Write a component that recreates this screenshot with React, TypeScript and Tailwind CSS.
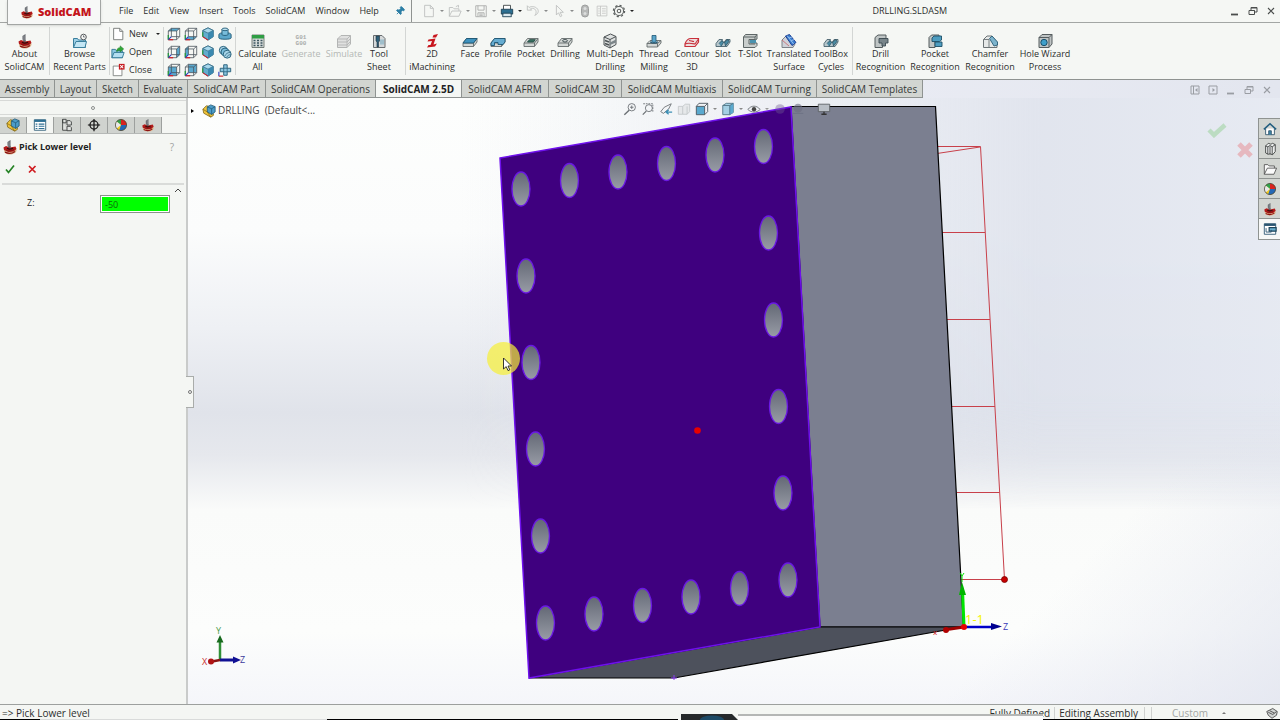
import React from "react";
import { Pin } from "lucide-react";

type IconProps = { className?: string };

function Svg({ className = "size-4", box = "0 0 16 16", children }: { className?: string; box?: string; children: React.ReactNode }) {
  return (
    <svg viewBox={box} className={`shrink-0 ${className}`} fill="none" aria-hidden="true">
      {children}
    </svg>
  );
}

function CamLogo({ className = "size-4" }: IconProps) {
  return (
    <Svg className={className}>
      <path d="M2 11.5c0-1.500 3-3 6.500-3s5.500 1 6 2.500c.4 2-2.500 4.500-6.500 4.500s-6-2-6-4z" fill="#dcb98f" />
      <path d="M1.500 8.500 4 7l4 1.500 5.500-1 1 2.500-3 2.500-5 .5L2 11z" fill="#b31b1b" />
      <path d="M4 11c2 1.200 6 1.200 8-.8M3 13.200c3 1.500 7 1.500 10-.8" stroke="#8e1414" strokeWidth="1.300" />
      <path d="M5 9.300c1.500 1 4 1 6 0" stroke="#2e0d0d" strokeWidth="1.200" />
      <path d="M5.500 3 8.500 1v5.500l.5 2-2 .8-1.500-3z" fill="#5d6166" />
      <path d="M7 2.500v5" stroke="#a8abb0" strokeWidth=".8" />
    </Svg>
  );
}

function AssemblyIcon({ className = "size-3.5" }: IconProps) {
  return (
    <Svg className={className}>
      <path d="M1 6l4-4 4 1v6l4 2v2l-3 2-8-4.500z" fill="#f0c53c" stroke="#7d6414" strokeWidth=".9" />
      <path d="M6 3.400 10 1l5 2v6l-4 3-5-3z" fill="#4c9dc9" stroke="#1d5673" strokeWidth=".9" />
      <path d="M6 3.400l5 2L15 3M11 5.400V12" stroke="#1d5673" strokeWidth=".8" />
      <path d="M1 6l5 3 4 6" stroke="#7d6414" strokeWidth=".8" />
    </Svg>
  );
}

function BallIcon({ className = "size-3.5" }: IconProps) {
  return (
    <Svg className={className}>
      <circle cx="8" cy="8" r="6.4" fill="#f2c81e" />
      <path d="M8 8 3 4A6.4 6.4 0 0 1 8 1.6z" fill="#31a04a" />
      <path d="M8 1.6A6.4 6.4 0 0 1 14.4 8H8z" fill="#d9231f" />
      <path d="M8 8h6.4A6.4 6.4 0 0 1 6 14z" fill="#2468b5" />
      <path d="M3 4a6.4 6.4 0 0 0 0 8l5-4z" fill="#e8e8e8" />
      <circle cx="8" cy="8" r="6.4" stroke="#3a3a3a" strokeWidth=".8" />
    </Svg>
  );
}

function FolderClock() {
  return (
    <Svg>
      <path d="M1.500 5.500h4l1 1.500h7v7.500h-12z" fill="#9fd0e6" stroke="#3a7f9c" />
      <path d="M1.500 14.500 4 8.500h10.500l-1.500 6z" fill="#c3e6f4" stroke="#3a7f9c" />
      <circle cx="11.500" cy="4" r="2.800" fill="#f4f6f4" stroke="#55595c" />
      <path d="M11.500 2.400V4h1.300" stroke="#55595c" strokeWidth=".8" />
    </Svg>
  );
}

function NewIcon({ className = "size-3.5" }: IconProps) {
  return (
    <Svg className={className}>
      <path d="M3 1.500h7l3.500 3.500v9.500H3z" fill="#fff" stroke="#6f7371" />
      <path d="M10 1.500V5h3.500" stroke="#6f7371" />
    </Svg>
  );
}

function OpenIcon() {
  return (
    <Svg className="size-3.5">
      <path d="M1 5h4l1 1.500h7V14.500H1z" fill="#8fc9e2" stroke="#2d7391" />
      <path d="M1 14.500 3.500 8.500H15l-2 6z" fill="#b4def0" stroke="#2d7391" />
      <path d="M6.500 7.500c0-3 1.500-4.500 4-4.500V1l4 3.500-4 3.500V6c-1.500 0-2.500.5-4 1.500z" fill="#2fa836" stroke="#177420" strokeWidth=".6" />
    </Svg>
  );
}

function CloseFileIcon() {
  return (
    <Svg className="size-3.5">
      <path d="M2.500 3.500h10v11h-10z" fill="#fff" stroke="#7d807e" />
      <rect x="9" y="1" width="6.500" height="6.500" fill="#c4161c" />
      <path d="M10.500 2.500l3.500 3.500M14 2.500l-3.500 3.500" stroke="#fff" strokeWidth="1.200" />
    </Svg>
  );
}

type Face = "top" | "right" | "bottom" | "left" | "front" | "back";
const facePath: Record<Face, string> = {
  top: "M1.500 4.500 5 1.500h9.500L11 4.500z",
  right: "M11 4.500 14.500 1.500V11L11 14.500z",
  bottom: "M1.500 14.500 5 11h9.500L11 14.500z",
  left: "M1.500 4.500 5 1.500V11l-3.500 3.500z",
  front: "M1.500 4.500H11v10H1.500z",
  back: "M5 1.500h9.500V11H5z",
};

function WireCube({ face }: { face: Face }) {
  return (
    <Svg className="size-3.5">
      <path d={facePath[face]} fill="#5aa9cf" />
      <path d="M1.500 4.500H11v10H1.500zM5 1.500h9.500V11H5zM1.500 4.500 5 1.500M11 4.500l3.500-3M11 14.500l3.500-3.500" stroke="#4a545c" strokeWidth=".9" />
      <path d="M1.500 14.500H7" stroke="#d3242c" strokeWidth="1.500" />
      <path d="M1.500 14.500V9" stroke="#2b9a3e" strokeWidth="1.500" />
      <path d="M1.500 14.500 5 11" stroke="#2a3ec0" strokeWidth="1.200" />
    </Svg>
  );
}

function SolidCube() {
  return (
    <Svg className="size-3.5">
      <path d="M8 1 14 4v7l-6 4-6-4V4z" fill="#63acce" stroke="#2b637c" />
      <path d="M2 4l6 3 6-3-6-3z" fill="#a9d8ec" stroke="#2b637c" strokeWidth=".8" />
      <path d="M8 7l6-3v7l-6 4z" fill="#3b89b0" />
      <path d="M2 11l6 4" stroke="#d3242c" strokeWidth="1.300" />
      <path d="M2 11V6" stroke="#2b9a3e" strokeWidth="1.300" />
    </Svg>
  );
}

function Boss() {
  return (
    <Svg className="size-3.5">
      <path d="M1 9c0-2 3-2.500 7-2.500s7 .5 7 2.500v3.500c0 2-14 2-14 0z" fill="#5ca7ca" stroke="#1f5872" />
      <path d="M4.500 2.500v6c0 1.500 7 1.500 7 0v-6" fill="#79bddb" stroke="#1f5872" />
      <ellipse cx="8" cy="2.700" rx="3.500" ry="1.500" fill="#bfe3f1" stroke="#1f5872" />
    </Svg>
  );
}

function Coils() {
  return (
    <Svg className="size-3.5">
      <circle cx="6" cy="6" r="4.500" fill="#a8d5e8" stroke="#1f5872" />
      <circle cx="8" cy="8" r="4.500" fill="#79bddb" stroke="#1f5872" />
      <circle cx="10.500" cy="10.500" r="4.500" fill="#a8d5e8" stroke="#1f5872" />
      <path d="M8 12.500c1-2.500 3-4 6-4M10 14c.8-1.800 2-2.800 4.500-3" stroke="#1f5872" strokeWidth=".8" />
    </Svg>
  );
}

function CrossBlocks() {
  return (
    <Svg className="size-3.5">
      <path d="M6.500 2h4v4h4v4h-4v4h-4v-4h-4V6h4z" fill="#8cc6df" stroke="#1f5872" />
      <path d="M6.500 6h4v4h-4z" stroke="#1f5872" strokeWidth=".8" />
      <path d="M1 10v5" stroke="#2a3ec0" strokeWidth="1.300" />
      <path d="M1 15h5" stroke="#d3242c" strokeWidth="1.300" />
    </Svg>
  );
}

function CalcIcon() {
  return (
    <Svg>
      <path d="M2 2h12v12.500H2z" fill="#d7dcda" stroke="#5a6460" strokeWidth=".8" />
      <path d="M2 2h12v3.500H2z" fill="#2f9e44" />
      <path d="M3.500 7.500h2M7 7.500h2M10.500 7.500h2M3.500 10h2M7 10h2M10.500 10h2M3.500 12.500h2M7 12.500h2M10.500 12.500h2" stroke="#3d5660" strokeWidth="1.400" />
    </Svg>
  );
}

function GCodeIcon() {
  return (
    <span className="flex h-4 flex-col items-center justify-end pb-0.5 font-mono text-[6px] leading-[6px] font-bold text-[#a9acaa]">
      <span>G01</span>
      <span>G00</span>
    </span>
  );
}

function SimulateIcon() {
  return (
    <Svg>
      <path d="M1.500 6 5 2.500h9.500V11L11 14.500H1.500z" fill="#e0e1e0" stroke="#b3b5b4" />
      <path d="M1.500 6H11l3.500-3.500M11 6v8.500M1.500 9H11l3.500-3.500M1.500 12H11l3.500-3.500" stroke="#b3b5b4" strokeWidth=".9" />
    </Svg>
  );
}

function SheetIcon() {
  return (
    <Svg>
      <path d="M2.500 2.500H11L14 5.500v9H2.500z" fill="#d5d9da" stroke="#686d6f" />
      <path d="M5 3h3.500v5l-1 1v5H6V9L5 8z" fill="#2e5f78" stroke="#20323c" strokeWidth=".6" />
      <path d="M10 6.500v5M12 6.500v5" stroke="#6aa5bd" />
    </Svg>
  );
}

function IMachIcon() {
  return (
    <Svg>
      <path d="M4.500 6.500 11.500 5.500 9.500 11.500 13 10.500 11 13.500 3 14.500l1.500-2.500h2L8 8 3.500 8.500z" fill="#c8161d" />
      <path d="M9.500 2 14 1l-2 3.500H8.500z" fill="#c8161d" />
    </Svg>
  );
}

function SlabIcon({ kind }: { kind: "face" | "profile" | "pocket" | "drill" }) {
  return (
    <Svg>
      <path d="M1 10 4.500 5.500H15V9l-3.500 4.500H1z" fill="#d3d7d5" stroke="#646c6c" strokeWidth=".9" />
      <path d="M1 10h10.500v3.500M11.500 10 15 5.500" stroke="#646c6c" strokeWidth=".9" />
      {kind === "face" && <path d="M1 10 4.500 5.500H15L11.500 10z" fill="#3f93bf" stroke="#1d5673" strokeWidth=".9" />}
      {kind === "profile" && <path d="M1 10 4.500 5.500H15V9l-2 2.500H8V9.500H4.500v3H1z" fill="#66acd0" stroke="#1d5673" strokeWidth=".9" />}
      {kind === "pocket" && <path d="M4.500 9 6.500 6.700h5.800L10.500 9z" fill="#3c7466" stroke="#1f473e" strokeWidth=".9" />}
      {kind === "drill" && <ellipse cx="8" cy="7.800" rx="2.400" ry="1.200" fill="#eef1ef" stroke="#39474a" />}
    </Svg>
  );
}

function DepthIcon() {
  return (
    <Svg>
      <path d="M2 4 8.500 1 14 3.500v8L8 15 2 12z" fill="#dfe2e1" stroke="#4c5254" />
      <path d="M2 4l6 2.500 6-3M8 6.500V15" stroke="#4c5254" />
      <path d="M3 7.500l4 1.500M3 10.500l4 1.500" stroke="#4c5254" strokeWidth="1.400" />
      <path d="M8 9.500 14 6.500v3L8 12z" fill="#7c8689" />
    </Svg>
  );
}

function ThreadIcon() {
  return (
    <Svg>
      <path d="M1 10.500 4 7.500h11v2.500l-3.500 4H1z" fill="#d3d7d5" stroke="#646c6c" strokeWidth=".9" />
      <path d="M1 10.500h10.500V14M11.500 10.500l3.500-3" stroke="#646c6c" strokeWidth=".9" />
      <path d="M6 2.500h4v6c0 1.200-4 1.200-4 0z" fill="#5ba5c9" stroke="#1d5673" strokeWidth=".8" />
      <path d="M4.500 8.500c0 2 7 2 7 0" stroke="#1d5673" strokeWidth="1.200" />
    </Svg>
  );
}

function ContourIcon() {
  return (
    <Svg>
      <path d="M1 11c1-3 3-5.500 6-5.500h7.500V9l-3.500 4.500H1z" fill="#ecdede" stroke="#c9303a" strokeWidth="1.200" />
      <path d="M1 11c3-1.500 5-1 10 0l3.500-5M5 7.500c2 0 3 1 5 1" stroke="#c9303a" strokeWidth="1.100" />
    </Svg>
  );
}

function SlotIcon() {
  return (
    <Svg>
      <path d="M1 10.500 4 6.500h3.500l-1 2.500h3l1.500-2.500H15v2.500l-3 4.500H1z" fill="#b8c8cd" stroke="#4a636e" strokeWidth=".9" />
      <path d="M4 10.500 7 7.500l1.500 2-2.500 4M9.500 9l3.500-2.500 1 2-3.500 4.500z" fill="#4b8ba3" stroke="#22495a" strokeWidth=".7" />
    </Svg>
  );
}

function TSlotIcon() {
  return (
    <Svg>
      <path d="M1.500 4 3.500 1.500H15V6l-2 1H8.500v3H15v2.500l-2 2H1.500z" fill="#c9cecc" stroke="#5d6666" />
      <path d="M1.500 4H13v2.500H7v4.500h6M13 4l2-2.500" stroke="#5d6666" />
      <path d="M8 7h6v3H8z" fill="#4a92ae" />
    </Svg>
  );
}

function SurfaceIcon() {
  return (
    <Svg>
      <path d="M1 7 5 3l9 8-2 3.500H1z" fill="#cfd2d8" stroke="#7d8288" />
      <path d="M4.500 3 8.500 1.500 15 9.500l-4 3z" fill="#3b7fd0" stroke="#1c3f93" />
      <path d="M6 2.500l6.800 8.700M8 5l3-1M10 8l3-1.500" stroke="#a9cdf2" strokeWidth=".8" />
      <path d="M1 7l7 6" stroke="#c9646a" strokeWidth=".8" />
    </Svg>
  );
}

function RecogIcon({ kind }: { kind: "drill" | "pocket" | "chamfer" }) {
  return (
    <Svg>
      {kind === "drill" && (
        <>
          <path d="M2 4.500 5 2h8v3.500H9.500v9H2z" fill="#bfc5c5" stroke="#545c5e" />
          <path d="M6 5.500h9v4.500h-2.500V13H9v-3H6z" fill="#78858a" stroke="#3b4a50" strokeWidth=".9" />
        </>
      )}
      {kind === "pocket" && (
        <>
          <path d="M2 4.500 4.500 2H12v3.500H8v9H2z" fill="#bfc5c5" stroke="#545c5e" />
          <path d="M5 5 7 3h7.500v4l-2 1.500H5zM8 9h7v4.500H8z" fill="#4e9dc0" stroke="#1d4f68" strokeWidth=".9" />
        </>
      )}
      {kind === "chamfer" && (
        <>
          <path d="M1.500 6.500 5 3h5l5 6v5.500H1.500z" fill="#e6e9e8" stroke="#6c7476" />
          <path d="M1.500 6.500H7v8" stroke="#6c7476" strokeWidth=".9" />
          <path d="M7.500 5.500 10 3l5.500 6v3L12 13z" fill="#7cb4cd" stroke="#2a5f78" strokeWidth=".9" />
        </>
      )}
    </Svg>
  );
}

function WizardIcon() {
  return (
    <Svg>
      <path d="M2 4.500 5 1.500h10v9.500l-3 3.500H2z" fill="#bfc4c4" stroke="#555c5e" />
      <path d="M2 4.500h10v10M12 4.500l3-3" stroke="#555c5e" />
      <circle cx="7" cy="9.500" r="3.200" fill="#3f9fca" stroke="#1c506a" />
    </Svg>
  );
}

function Tool({ icon, lines, className, disabled }: { icon: React.ReactNode; lines: string[]; className: string; disabled?: boolean }) {
  return (
    <button
      type="button"
      disabled={disabled}
      className={`flex shrink-0 flex-col items-center pt-2.5 text-[9px] leading-[13px] whitespace-nowrap ${disabled ? "text-[#b4b7b5]" : "text-[#2c2e2d]"} ${className}`}
    >
      <span className="flex h-3.5 justify-center">{icon}</span>
      {lines.map((line) => (
        <span key={line}>{line}</span>
      ))}
    </button>
  );
}

function Divider() {
  return <span className="my-1 w-px shrink-0 bg-[#d3d6d4]" />;
}

function Caret({ className = "border-t-[#3c3f3e]" }: IconProps) {
  return <span className={`size-0 shrink-0 border-x-2 border-t-2 border-x-transparent ${className}`} />;
}

function WindowButtons({ tone }: { tone: string }) {
  return (
    <div className={`flex items-center gap-2 ${tone}`}>
      <button type="button" aria-label="Minimize">
        <Svg className="size-2.5" box="0 0 10 10"><path d="M1 8.500h7" stroke="currentColor" strokeWidth="1.800" /></Svg>
      </button>
      <button type="button" aria-label="Restore">
        <Svg className="size-2.5" box="0 0 10 10"><path d="M1 4.500h5.500v4H1zM3 4V1.500h6v4.500H6.500M1 4.500h5.500M3 2h6" stroke="currentColor" /></Svg>
      </button>
      <button type="button" aria-label="Close window">
        <Svg className="size-2.5" box="0 0 10 10"><path d="M2 2l6 6M8 2l-6 6" stroke="currentColor" strokeWidth="1.100" /></Svg>
      </button>
    </div>
  );
}

const menus = ["File", "Edit", "View", "Insert", "Tools", "SolidCAM", "Window", "Help"];

function QuickAccess() {
  const pale = "#bdbfbe";
  return (
    <div className="ml-2.5 flex items-center gap-1 text-[#bdbfbe]">
      <button type="button" aria-label="New document" className="flex items-center gap-1">
        <Svg className="size-3.5"><path d="M3 1.500h6.500l3.500 3.500v9.500H3zM9.500 1.500V5H13" stroke={pale} /></Svg>
        <Caret className="border-t-[#8a8c8b]" />
      </button>
      <button type="button" aria-label="Open document" className="flex items-center gap-1">
        <Svg className="size-3.5"><path d="M1.500 14V4h4L7 5.500h5.500V8M1.500 14l3-6h10.500l-2.500 6zM9 3l3-1.500V4" stroke={pale} /></Svg>
        <Caret className="border-t-[#8a8c8b]" />
      </button>
      <button type="button" aria-label="Save" className="flex items-center gap-1">
        <Svg className="size-3.5"><path d="M2 2h12v12.500H2zM4.500 2v5h7V2M4.500 14.500V10h7v4.500M6 11.500h4M6 13h4" stroke="#a9abaa" /></Svg>
        <Caret className="border-t-[#8a8c8b]" />
      </button>
      <button type="button" aria-label="Print" className="flex items-center gap-1">
        <Svg className="size-3.5">
          <path d="M4 6V1.500h8V6" fill="#fff" stroke="#3c4244" />
          <path d="M1.500 6h13v5.500h-13z" fill="#2c6f91" stroke="#1b3f52" />
          <path d="M3.500 10.500h9l.5 4H3z" fill="#d9e8ef" stroke="#1b3f52" />
        </Svg>
        <Caret className="border-t-[#222]" />
      </button>
      <button type="button" aria-label="Undo" className="flex items-center gap-1">
        <Svg className="size-3.5"><path d="M1.500 2v5h5L5 5.500c3-1.500 6 0 6.500 3 .2 2-.5 3.500-1.500 4.500 4-1.500 5-5 3-7.500S6.500 2 3.500 4z" stroke={pale} /></Svg>
        <Caret className="border-t-[#8a8c8b]" />
      </button>
      <button type="button" aria-label="Select" className="flex items-center gap-1">
        <Svg className="size-3.5"><path d="M5 1.500v11l2.500-2.500 2 4.500 1.800-1-2-4H13z" stroke={pale} /></Svg>
        <Caret className="border-t-[#8a8c8b]" />
      </button>
      <button type="button" aria-label="Rebuild" className="px-0.5">
        <Svg className="h-3.5 w-2.5" box="0 0 10 14"><rect x="1.500" y="1" width="7" height="12" rx="3.500" fill="#b7b9b8" stroke="#9c9e9d" /><circle cx="5" cy="4.500" r="1.500" fill="#dcdedd" /><circle cx="5" cy="9.500" r="1.500" fill="#dcdedd" /></Svg>
      </button>
      <button type="button" aria-label="File properties">
        <Svg className="size-3"><path d="M1.500 1.500h13v13h-13zM6 1.500v13M3 5h2M3 8h2M3 11h2M8 5h5M8 8h5M8 11h5" stroke={pale} /></Svg>
      </button>
      <button type="button" aria-label="Options" className="flex items-center gap-1">
        <Svg className="size-3.5">
          <circle cx="8" cy="8" r="5.200" stroke="#5a5e5d" strokeWidth="1.200" />
          <circle cx="8" cy="8" r="6.400" stroke="#5a5e5d" strokeWidth="1.400" strokeDasharray="2.500 2.500" />
          <circle cx="8" cy="8" r="2" stroke="#5a5e5d" strokeWidth="1.200" />
        </Svg>
        <Caret className="border-t-[#222]" />
      </button>
    </div>
  );
}

function TitleBar() {
  return (
    <header className="relative z-10 flex h-[23px] shrink-0 items-center border-b border-[#a3a6a4] bg-[#f5f7f4] pr-1">
      <div className="ml-[7px] flex h-[25px] w-[94px] shrink-0 items-center gap-1 self-start border border-t-0 border-[#a3a6a4] bg-[#f7f8f7] pl-3 shadow-sm">
        <CamLogo className="size-3.5" />
        <span className="text-[11px] leading-4 font-extrabold text-[#c4141b]">SolidCAM</span>
      </div>
      <nav className="ml-[18px] flex items-center gap-2.5 text-[9px] text-[#2c2e2d]">
        {menus.map((m) => (
          <button key={m} type="button">{m}</button>
        ))}
      </nav>
      <button type="button" aria-label="Pin menu" className="ml-4 text-[#2d7fa6]">
        <Pin className="size-2.5 rotate-45 fill-current" />
      </button>
      <span className="ml-1.5 h-full w-px bg-[#8f9391]" />
      <QuickAccess />
      <span className="ml-auto text-[9px] text-[#2c2e2d]">DRLLING.SLDASM</span>
      <div className="ml-[283px]">
        <WindowButtons tone="text-[#4a4d4c]" />
      </div>
    </header>
  );
}

function Ribbon() {
  return (
    <section aria-label="Commands" className="flex h-[57px] shrink-0 overflow-hidden border-b border-[#8f9391] bg-[#f5f7f4]">
      <Tool className="w-[49px]" icon={<CamLogo />} lines={["About", "SolidCAM"]} />
      <Divider />
      <Tool className="w-[59px]" icon={<FolderClock />} lines={["Browse", "Recent Parts"]} />
      <Divider />
      <div className="flex w-[53px] shrink-0 flex-col justify-center gap-1 pt-0.5 pl-px text-[9px] leading-[14px] text-[#2c2e2d]">
        <button type="button" className="flex items-center gap-1"><NewIcon />New<Caret className="ml-1 border-t-[#222]" /></button>
        <button type="button" className="flex items-center gap-1"><OpenIcon />Open</button>
        <button type="button" className="flex items-center gap-1"><CloseFileIcon />Close</button>
      </div>
      <Divider />
      <div className="grid w-[71px] shrink-0 grid-cols-4 content-center justify-items-center gap-y-1 px-px pt-0.5">
        <WireCube face="top" />
        <WireCube face="bottom" />
        <SolidCube />
        <Boss />
        <WireCube face="right" />
        <WireCube face="left" />
        <SolidCube />
        <Coils />
        <WireCube face="front" />
        <WireCube face="back" />
        <SolidCube />
        <CrossBlocks />
      </div>
      <Divider />
      <Tool className="w-[43px]" icon={<CalcIcon />} lines={["Calculate", "All"]} />
      <Tool className="w-11" icon={<GCodeIcon />} lines={["Generate"]} disabled />
      <Tool className="w-[42px]" icon={<SimulateIcon />} lines={["Simulate"]} disabled />
      <Tool className="mr-3 w-7" icon={<SheetIcon />} lines={["Tool", "Sheet"]} />
      <Divider />
      <Tool className="w-[52px]" icon={<IMachIcon />} lines={["2D", "iMachining"]} />
      <Tool className="w-6" icon={<SlabIcon kind="face" />} lines={["Face"]} />
      <Tool className="w-8" icon={<SlabIcon kind="profile" />} lines={["Profile"]} />
      <Tool className="w-[34px]" icon={<SlabIcon kind="pocket" />} lines={["Pocket"]} />
      <Tool className="w-[34px]" icon={<SlabIcon kind="drill" />} lines={["Drilling"]} />
      <Tool className="w-14" icon={<DepthIcon />} lines={["Multi-Deph", "Drilling"]} />
      <Tool className="w-8" icon={<ThreadIcon />} lines={["Thread", "Milling"]} />
      <Tool className="w-11" icon={<ContourIcon />} lines={["Contour", "3D"]} />
      <Tool className="w-[18px]" icon={<SlotIcon />} lines={["Slot"]} />
      <Tool className="w-9" icon={<TSlotIcon />} lines={["T-Slot"]} />
      <Tool className="w-[42px]" icon={<SurfaceIcon />} lines={["Translated", "Surface"]} />
      <Tool className="w-[42px]" icon={<SlotIcon />} lines={["ToolBox", "Cycles"]} />
      <Divider />
      <Tool className="w-[55px]" icon={<RecogIcon kind="drill" />} lines={["Drill", "Recognition"]} />
      <Tool className="w-[54px]" icon={<RecogIcon kind="pocket" />} lines={["Pocket", "Recognition"]} />
      <Tool className="w-14" icon={<RecogIcon kind="chamfer" />} lines={["Chamfer", "Recognition"]} />
      <Tool className="w-[54px]" icon={<WizardIcon />} lines={["Hole Wizard", "Process"]} />
    </section>
  );
}

const tabs: { label: string; width: string }[] = [
  { label: "Assembly", width: "w-[55px]" },
  { label: "Layout", width: "w-[42px]" },
  { label: "Sketch", width: "w-[42px]" },
  { label: "Evaluate", width: "w-[49px]" },
  { label: "SolidCAM Part", width: "w-[78px]" },
  { label: "SolidCAM Operations", width: "w-[110px]" },
  { label: "SolidCAM 2.5D", width: "w-[86px]" },
  { label: "SolidCAM AFRM", width: "w-[87px]" },
  { label: "SolidCAM 3D", width: "w-[73px]" },
  { label: "SolidCAM Multiaxis", width: "w-[101px]" },
  { label: "SolidCAM Turning", width: "w-[94px]" },
  { label: "SolidCAM Templates", width: "w-[106px]" },
];

function TabBar() {
  return (
    <div className="flex h-[18px] shrink-0 items-center bg-linear-to-r from-[#e9ebf3] from-70% to-[#e3e6ef]">
      <div role="tablist" className="flex h-full shrink-0">
        {tabs.map((t) => {
          const active = t.label === "SolidCAM 2.5D";
          return (
            <button
              key={t.label}
              role="tab"
              type="button"
              aria-selected={active}
              className={`flex h-full items-center justify-center border-r border-b border-[#8f9391] pt-0.5 text-[10px] whitespace-nowrap ${t.width} ${active ? "bg-[#f5f7f4] font-bold text-[#222]" : "bg-[#d2d5d1] text-[#363938]"}`}
            >
              {t.label}
            </button>
          );
        })}
      </div>
      <div className="mr-2 ml-auto flex items-center gap-2 pt-0.5 text-[#9a9da3]">
        <button type="button" aria-label="Dock left">
          <Svg className="size-2.5" box="0 0 10 10"><path d="M1 1h8v8H1zM3.500 1v8" stroke="currentColor" /><path d="M7.500 3 5 5l2.500 2z" fill="currentColor" /></Svg>
        </button>
        <button type="button" aria-label="Dock right">
          <Svg className="size-2.5" box="0 0 10 10"><path d="M1 1h8v8H1z" stroke="currentColor" /><path d="M4.500 3 7 5 4.500 7z" fill="currentColor" /></Svg>
        </button>
        <WindowButtons tone="text-[#9a9da3]" />
      </div>
    </div>
  );
}

function PropertyPanel() {
  const panelTabs: { name: string; icon: React.ReactNode }[] = [
    { name: "Feature tree", icon: <AssemblyIcon /> },
    {
      name: "Properties",
      icon: (
        <Svg className="size-3.5">
          <path d="M1.500 2h13v12h-13z" fill="#fff" stroke="#2d5b77" />
          <path d="M1.500 2h13v2.500h-13z" fill="#2d6f94" />
          <path d="M3 7h2M3 9.500h2M3 12h2M6.500 7H13M6.500 9.500H13M6.500 12H13" stroke="#2d6f94" strokeWidth="1.200" />
        </Svg>
      ),
    },
    {
      name: "Configurations",
      icon: (
        <Svg className="size-3.5">
          <path d="M3 1.500h4v4H3zM3 1.500V14h5M8 3h3.500l1.500 1.500V8H8zM8 9.500h3.500L13 11v3.500H8z" fill="#dfe1df" stroke="#3c3f3e" />
        </Svg>
      ),
    },
    {
      name: "Dimensions",
      icon: (
        <Svg className="size-3.5">
          <circle cx="8" cy="8" r="4.600" stroke="#111" strokeWidth="1.400" />
          <path d="M8 1v14M1 8h14" stroke="#111" strokeWidth="1.400" />
        </Svg>
      ),
    },
    { name: "Display", icon: <BallIcon /> },
    { name: "CAM", icon: <CamLogo className="size-3.5" /> },
  ];
  return (
    <aside className="relative flex w-[188px] shrink-0 flex-col border-r-2 border-[#c9cbca] bg-[#f4f6f3] text-[#222]">
      <div className="mt-0.5 flex h-[15px] items-center justify-center border-y border-[#d7d9d7]">
        <span className="size-1 rounded-full border border-[#8c8f8d]" />
      </div>
      <div role="tablist" className="flex h-[19px] border-b border-[#b5b8b6] pt-0.5">
        {panelTabs.map((t) => (
          <button
            key={t.name}
            type="button"
            role="tab"
            aria-label={t.name}
            aria-selected={t.name === "Properties"}
            className={`flex w-[27px] items-center justify-center border-r border-[#9da09e] ${t.name === "Properties" ? "bg-[#f4f6f3]" : "bg-[#d0d3cf]"}`}
          >
            {t.icon}
          </button>
        ))}
      </div>
      <div className="flex h-[26px] items-center gap-px pr-3 pl-0.5">
        <CamLogo />
        <h1 className="text-[9px] font-bold">Pick Lower level</h1>
        <button type="button" aria-label="Help" className="ml-auto text-[10px] text-[#a0a3a1]">?</button>
      </div>
      <div className="mx-0.5 flex h-[25px] items-start gap-3 border-b-2 border-[#d9dbd9] pt-1 pl-[3px]">
        <button type="button" aria-label="OK">
          <Svg className="size-2.5" box="0 0 10 10"><path d="M1 5.500 3.500 8.500 9 1.500" stroke="#258325" strokeWidth="1.700" /></Svg>
        </button>
        <button type="button" aria-label="Cancel">
          <Svg className="size-2.5" box="0 0 10 10"><path d="M2 2l6.500 6.500M8.500 2 2 8.500" stroke="#cf1a1f" strokeWidth="1.700" /></Svg>
        </button>
      </div>
      <button type="button" aria-label="Collapse" className="mt-px mr-1 self-end">
        <Svg className="size-2" box="0 0 8 8"><path d="M1 6l3-3 3 3" stroke="#444" /></Svg>
      </button>
      <div className="mt-px flex items-start pr-4 pl-[27px]">
        <label htmlFor="z-level" className="w-[74px] text-[9px] leading-4">Z:</label>
        <input
          id="z-level"
          type="text"
          defaultValue="-50"
          className="h-[18px] w-[70px] rounded-none border border-[#8c928c] bg-[#00ff00] px-1 text-[9px] text-[#0b6a0b] outline-1 -outline-offset-2 outline-white"
        />
      </div>
      <button
        type="button"
        aria-label="Toggle panel"
        className="absolute top-[278px] -right-2 z-10 flex h-8 w-2 items-center justify-center border border-l-0 border-[#a9acaa] bg-[#f4f6f3]"
      >
        <span className="size-1 rounded-full border border-[#777]" />
      </button>
    </aside>
  );
}

const holes: [number, number][] = [
  [521, 189], [569.5, 180.5], [618, 172], [666.5, 163.5], [715, 155], [763.5, 146.5],
  [526, 276], [531, 362.5], [535.5, 449], [540.5, 536], [545.5, 623],
  [768.5, 233], [773.5, 320], [778.5, 406.5], [783, 493], [788, 580],
  [594, 614], [642.5, 605.5], [691, 597], [739.5, 588.5],
];

function Model() {
  return (
    <svg viewBox="188 98 1092 606" className="block h-full w-full" role="img" aria-label="Drilling model">
      <defs>
        <linearGradient id="bore" x1="0" y1="0" x2="0" y2="1">
          <stop offset="0" stopColor="#636875" />
          <stop offset="1" stopColor="#989ca6" />
        </linearGradient>
      </defs>
      <g stroke="#c8404a" strokeWidth="1" fill="none">
        <path d="M937 146.500H980.500L1004.500 579.500H960M980 147 937 153.500M942 232.500H985M947 319.500H990M952 406.500H995M957 492.500H999.500" />
      </g>
      <polygon points="791,106.500 935.500,106.500 963.500,627 820,627" fill="#7b7f90" stroke="#000" strokeWidth="1.200" />
      <polygon points="529,678 820,627 963,627 674,678" fill="#4d515c" stroke="#000" strokeWidth="1.200" />
      <polygon points="500,158 791,107 820,627 529,678" fill="#3f007f" stroke="#6f10ee" strokeWidth="1.500" />
      {holes.map(([x, y]) => (
        <ellipse key={`${x}-${y}`} cx={x} cy={y} rx="9" ry="17" fill="url(#bore)" stroke="#6a18e4" strokeWidth="1.300" />
      ))}
      <circle cx="697.5" cy="430.500" r="3.300" fill="#e80000" />
      <path d="M671 678h6M674 675v5" stroke="#8a3ff0" />
      <circle cx="1004.500" cy="579.500" r="3" fill="#c80000" stroke="#700" strokeWidth=".8" />
      <path d="M964 626 962.500 590" stroke="#00e400" strokeWidth="3" />
      <path d="M959 595 962 582l4 13z" fill="#00b400" />
      <path d="M960 573l2 3 2-3M962 576v6" stroke="#00e400" fill="none" />
      <path d="M964 627H992" stroke="#0000c8" strokeWidth="2.500" />
      <path d="M991 623l11 3.500-11 3.500z" fill="#00008f" />
      <path d="M964 627 947 629.500" stroke="#a00000" strokeWidth="3" />
      <circle cx="946" cy="630" r="3" fill="#b00000" />
      <circle cx="964" cy="627" r="3" fill="#e80000" />
      <g className="font-['Open_Sans',sans-serif]">
        <text x="965" y="624" fontSize="13" fill="#f4f400">1-1</text>
        <text x="1003" y="630" fontSize="9" fill="#3a3ab8">Z</text>
        <text x="933" y="635" fontSize="8" fill="#d02020">x</text>
        <text x="216" y="634" fontSize="9" fill="#4d9c4d">Y</text>
        <text x="202" y="665" fontSize="9" fill="#c83030">X</text>
        <text x="240" y="663" fontSize="9" fill="#3c3c9c">Z</text>
      </g>
      <path d="M220 660V641" stroke="#2f8f36" strokeWidth="2.500" />
      <path d="M216.500 642.500 220 635l3.500 7.500z" fill="#186a1e" />
      <path d="M220 660H235" stroke="#101094" strokeWidth="3" />
      <path d="M233 656.500 241 660l-8 3.500z" fill="#101094" />
      <path d="M220 660l-8 1.500" stroke="#8a1414" strokeWidth="2.500" />
      <circle cx="211" cy="661.500" r="3" fill="#b01414" />
      <circle cx="503.500" cy="358.500" r="16.500" fill="#f6f034" fillOpacity=".7" />
      <path d="M503.500 358v11l2.700-2.400 1.800 4 1.800-.8-1.800-3.800h3.500z" fill="#fff" stroke="#222" strokeWidth=".9" />
    </svg>
  );
}

function ViewToolbar() {
  return (
    <div className="absolute top-1 left-[435px] flex items-center gap-1 text-[#6a6f73]">
      <button type="button" aria-label="Zoom to fit"><Svg className="size-3.5"><circle cx="10" cy="6" r="4.200" stroke="currentColor" /><path d="M7 9.500 1.500 14.500" stroke="currentColor" strokeWidth="1.600" /><path d="M8 6h4M10 4v4" stroke="currentColor" /></Svg></button>
      <button type="button" aria-label="Zoom to area"><Svg className="size-3.5"><path d="M2.500 2h11v9" stroke="currentColor" strokeDasharray="2 1" /><circle cx="9" cy="7" r="4" stroke="currentColor" /><path d="M6 10.500 2 14.500" stroke="currentColor" strokeWidth="1.400" /></Svg></button>
      <button type="button" aria-label="Previous view"><Svg className="size-3.5"><path d="M14 2 6 6 2 11l3 2 6-5z" stroke="currentColor" /><path d="M15 11.500H8.500M11 9l-3 2.500 3 2.500" stroke="#3d8fb5" strokeWidth="1.500" /></Svg></button>
      <button type="button" aria-label="Section view"><Svg className="size-3.5"><path d="M1.500 5h5v9h-5zM6.500 5l3-2.500h5V11l-3 3h-5M11.500 5v9" fill="#e6e8ea" stroke="#c4c7c9" /></Svg></button>
      <button type="button" aria-label="View orientation" className="flex items-center gap-1"><Svg className="size-3.5"><path d="M1.500 5H11v9.500H1.500z" fill="#5aa9cf" /><path d="M1.500 5H11v9.500H1.500zM4.500 1.500h10V11M1.500 5l3-3.500M11 5l3.500-3.500M11 14.500l3.500-3.500" stroke="#4a545c" /></Svg><Caret className="border-t-[#888]" /></button>
      <button type="button" aria-label="Display style" className="flex items-center gap-1"><Svg className="size-3.5"><path d="M2 4 6 1.500h8V12l-4 2.500H2z" fill="#a4d0e4" stroke="#4f7484" /><path d="M10 4l4-2.500V12l-4 2.500z" fill="#5aa9cf" /><path d="M2 4h8v10.500M10 4l4-2.500" stroke="#4f7484" /></Svg><Caret className="border-t-[#888]" /></button>
      <button type="button" aria-label="Hide items" className="flex items-center gap-1"><Svg className="size-3.5"><path d="M1 8.500c4-5 10-5 14 0-4 4-10 4-14 0z" stroke="currentColor" /><circle cx="8" cy="8.300" r="2.500" fill="#444" /></Svg><Caret className="border-t-[#999]" /></button>
      <button type="button" aria-label="Edit appearance"><Svg className="size-3.5"><circle cx="8" cy="8" r="5.500" fill="#6d5a92" fillOpacity=".4" /></Svg></button>
      <button type="button" aria-label="Apply scene" className="mr-2"><Svg className="size-3.5"><circle cx="8" cy="7" r="5" fill="#6a6d80" fillOpacity=".6" /><path d="M2 13h12" stroke="#6c7082" /></Svg></button>
      <button type="button" aria-label="View settings"><Svg className="size-3.5"><path d="M1.500 2.500h13V11h-13z" fill="#b9bfc6" stroke="#5b6064" /><path d="M8 11v3M5 14h6" stroke="#333" strokeWidth="1.500" /></Svg></button>
    </div>
  );
}

function TaskPane() {
  const items: { name: string; icon: React.ReactNode }[] = [
    { name: "Home", icon: <Svg className="size-3.5"><path d="M3 7.500V14.500h10V7.500" fill="#fff" stroke="#30566c" /><path d="M1 8.500 8 2l7 6.500" stroke="#235f80" strokeWidth="1.800" /><path d="M6.500 14.500V10h3v4.500" fill="#3f86a8" stroke="#30566c" /></Svg> },
    { name: "Design library", icon: <Svg className="size-3.5"><path d="M3 4.500 6 1.500l3 1 2-1 3 1.500V11l-3 3.500-3-1-2 .5-3-1.500z" fill="#eceeed" stroke="#3c3f3e" /><path d="M5.500 5.500V14M8 5v9M10.500 5.500v9M3 4.500l2.500 1L8 4l2.500 1.500L14 3" stroke="#3c3f3e" /></Svg> },
    { name: "File explorer", icon: <Svg className="size-3.5"><path d="M1.500 14V3h4L7 4.500h6V7M1.500 14l3.500-7h10.500l-3 7z" fill="#fafafa" stroke="#555" /></Svg> },
    { name: "Appearances", icon: <BallIcon className="size-3.5" /> },
    { name: "SolidCAM", icon: <CamLogo className="size-3.5" /> },
    { name: "Custom properties", icon: <Svg className="size-3.5"><path d="M1.500 2h13v12h-13z" fill="#fff" stroke="#2a5570" /><path d="M1.500 2h13v2.500h-13z" fill="#2a5570" /><path d="M7 6.500h8v4H7z" fill="#6bb1d0" stroke="#1d4358" strokeWidth="1.300" /><path d="M3.500 7v4.500h6V9" stroke="#2a5570" /></Svg> },
  ];
  return (
    <nav aria-label="Task pane" className="absolute top-[20px] right-0 flex w-[22px] flex-col border border-r-0 border-[#8f9391]">
      {items.map((i) => (
        <button
          key={i.name}
          type="button"
          aria-label={i.name}
          className={`flex h-5 items-center justify-center border-b border-[#8f9391] last:border-b-0 ${i.name === "Custom properties" ? "bg-[#f7f8f7]" : "bg-[#d2d5d1]"}`}
        >
          {i.icon}
        </button>
      ))}
    </nav>
  );
}

function Viewport() {
  return (
    <main className="relative min-w-0 flex-1 overflow-hidden bg-[linear-gradient(180deg,#fdfefd_0%,#fbfcfc_22%,#eef0f4_38%,#e0e3ea_52%,#e6e8ed_59%,#fafbfa_68%,#fcfdfc_88%,#f5f6fa_100%)]">
      <div className="absolute inset-0 bg-[linear-gradient(90deg,transparent_25%,rgba(222,226,236,0.9)_78%,rgba(228,232,241,0.9)_100%)] mask-[linear-gradient(180deg,#000_50%,transparent_68%)]" />
      <div className="absolute inset-0 bg-[linear-gradient(135deg,transparent_80%,rgba(226,229,239,0.8)_100%)]" />
      <div className="absolute inset-0">
        <Model />
      </div>
      <div className="absolute top-[5px] left-[3px] flex items-center gap-1 text-[10px] text-[#444]">
        <span className="mr-1 size-0 border-y-2 border-l-[3px] border-y-transparent border-l-black" />
        <AssemblyIcon />
        <span className="-ml-0.5 whitespace-pre">DRLLING  (Default&lt;...</span>
      </div>
      <ViewToolbar />
      <div className="absolute top-6 right-[27px] flex gap-2.5">
        <button type="button" aria-label="Confirm" className="mb-5">
          <Svg className="h-4 w-5" box="0 0 20 16"><path d="M2 8l5 5L18 3" stroke="#bcdcc2" strokeWidth="4.500" /></Svg>
        </button>
        <button type="button" aria-label="Discard" className="mt-5">
          <Svg className="size-4"><path d="M2 2l12 12M14 2 2 14" stroke="#e6b8bf" strokeWidth="5" /></Svg>
        </button>
      </div>
      <TaskPane />
    </main>
  );
}

function StatusBar() {
  return (
    <footer className="relative flex h-4 shrink-0 items-center overflow-hidden border-t border-[#9da09e] bg-[#f4f6f3] text-[10px] leading-4 text-[#2c2e2d]">
      <span className="pl-0.5">=&gt; Pick Lower level</span>
      <div className="ml-auto flex items-center">
        <span>Fully Defined</span>
        <span className="mx-1 h-3 w-px bg-[#cfd1cf]" />
        <span>Editing Assembly</span>
        <span className="mx-1.5 h-3 w-px bg-[#cfd1cf]" />
        <span className="mr-5 h-3 w-px bg-[#cfd1cf]" />
        <span className="text-[#a3a6a4]">Custom</span>
        <span className="mr-10 ml-3.5 size-0 border-x-2 border-b-2 border-x-transparent border-b-[#777]" />
        <Svg className="mr-0.5 size-3"><path d="M1 6 9 2l6 4-1 5-6 4-5-4z" fill="#d0d3d1" stroke="#333" /><path d="M3 7l6 3 5-4M5 5l6 3" stroke="#333" /></Svg>
      </div>
      <div className="absolute inset-x-0 bottom-0 flex h-1.5 items-end">
        <span className="h-px w-10 bg-black" />
        <span className="h-px w-[287px] bg-[#d9dbda]" />
        <span className="h-px w-[351px] bg-black" />
        <svg viewBox="0 0 60 6" className="h-1.5 w-[60px]" aria-hidden="true">
          <path d="M3 0H54L60 6H3z" fill="#26292b" />
          <ellipse cx="34" cy="6" rx="12" ry="4.500" fill="#1d4a66" />
        </svg>
        <span className="h-1.5 w-[305px] border-t-2 border-[#b4b6b5] bg-[#fbfbfb]" />
        <span className="h-px flex-1 bg-black" />
      </div>
    </footer>
  );
}

export default function App() {
  return (
    <div className="flex h-screen flex-col overflow-hidden bg-[#f4f6f3] font-['Open_Sans','Noto_Sans',sans-serif]">
      <TitleBar />
      <Ribbon />
      <TabBar />
      <div className="flex min-h-0 flex-1">
        <PropertyPanel />
        <Viewport />
      </div>
      <StatusBar />
    </div>
  );
}
